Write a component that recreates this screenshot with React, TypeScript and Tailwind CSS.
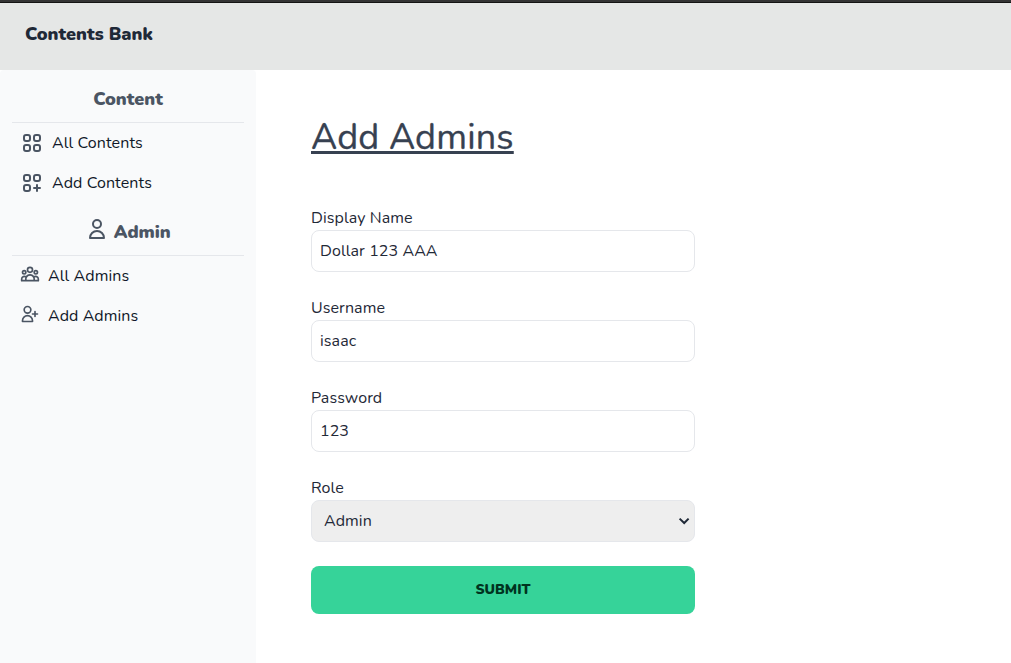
import React, { useState } from "react";
import type { ReactNode } from "react";
import {
  HiOutlineUser,
  HiOutlineUserAdd,
  HiOutlineUserGroup,
  HiOutlineViewGrid,
  HiOutlineViewGridAdd,
} from "react-icons/hi";

function NavItem({ icon, label }: { icon: ReactNode; label: string }) {
  return (
    <li>
      <a href="#" className="flex h-10 items-center px-2 text-base text-gray-900">
        <span className="mr-2 text-[#4b5563]">{icon}</span>
        {label}
      </a>
    </li>
  );
}

function NavHeading({ children }: { children: ReactNode }) {
  return (
    <h2 className="flex h-[53px] justify-center border-b border-[#e5e7eb] pt-[15px] text-lg leading-7 font-black tracking-normal text-[#4b5563]">
      {children}
    </h2>
  );
}

function Field({ label, children }: { label: string; children: ReactNode }) {
  return (
    <label className="mb-6 block leading-6">
      <span className="block">{label}</span>
      {children}
    </label>
  );
}

function TextField({ label, initial }: { label: string; initial: string }) {
  const [value, setValue] = useState(initial);
  return (
    <Field label={label}>
      <input
        type="text"
        value={value}
        onChange={(e) => setValue(e.target.value)}
        className="block h-[42px] w-full rounded-lg border border-[#e5e7eb] bg-white px-2 outline-none"
      />
    </Field>
  );
}

export default function App() {
  return (
    <div className="flex h-screen flex-col overflow-hidden bg-white font-[Nunito,Lato,sans-serif] text-base tracking-[0.08px] text-[#1f2937]">
      <div className="h-[3px] shrink-0 border-b border-[#141414] bg-[#343434]" />
      <header className="h-[67px] shrink-0 bg-[#e5e7e6] px-[25px] pt-[17px]">
        <h1 className="text-lg leading-7 font-black tracking-normal">Contents Bank</h1>
      </header>
      <div className="flex flex-1">
        <aside className="w-64 rounded-t bg-[#f9fafb] px-3">
          <NavHeading>Content</NavHeading>
          <ul>
            <NavItem icon={<HiOutlineViewGrid size={24} />} label="All Contents" />
            <NavItem icon={<HiOutlineViewGridAdd size={24} />} label="Add Contents" />
          </ul>
          <NavHeading>
            <HiOutlineUser size={24} className="-mt-px mr-[4.5px]" />
            Admin
          </NavHeading>
          <ul>
            <NavItem icon={<HiOutlineUserGroup size={20} className="mb-1" />} label="All Admins" />
            <NavItem icon={<HiOutlineUserAdd size={20} className="mb-1" />} label="Add Admins" />
          </ul>
        </aside>
        <main className="flex-1 pt-[48px] pl-[55px]">
          <h2 className="mb-12 text-4xl leading-10 tracking-[0.004em] text-[#374151] underline decoration-[3px] [-webkit-text-stroke:0.3px_#374151]">
            Add Admins
          </h2>
          <form className="w-96" onSubmit={(e) => e.preventDefault()}>
            <TextField label="Display Name" initial="Dollar 123 AAA" />
            <TextField label="Username" initial="isaac" />
            <TextField label="Password" initial="123" />
            <Field label="Role">
              <span className="relative block">
                <select className="block h-[42px] w-full appearance-none rounded-lg border border-[#e5e7eb] bg-[#eeeeee] px-3">
                  <option>Admin</option>
                </select>
                <svg
                  viewBox="0 0 12 8"
                  className="pointer-events-none absolute top-[17px] right-[5px] h-2 w-3"
                  fill="none"
                  stroke="currentColor"
                  strokeWidth="2"
                >
                  <path d="M1.6 1.6 6.2 6l4.4-4.4" />
                </svg>
              </span>
            </Field>
            <button
              type="submit"
              className="block h-12 w-full rounded-lg bg-[#36d399] text-sm font-black tracking-normal text-[#003320] uppercase"
            >
              Submit
            </button>
          </form>
        </main>
      </div>
    </div>
  );
}
